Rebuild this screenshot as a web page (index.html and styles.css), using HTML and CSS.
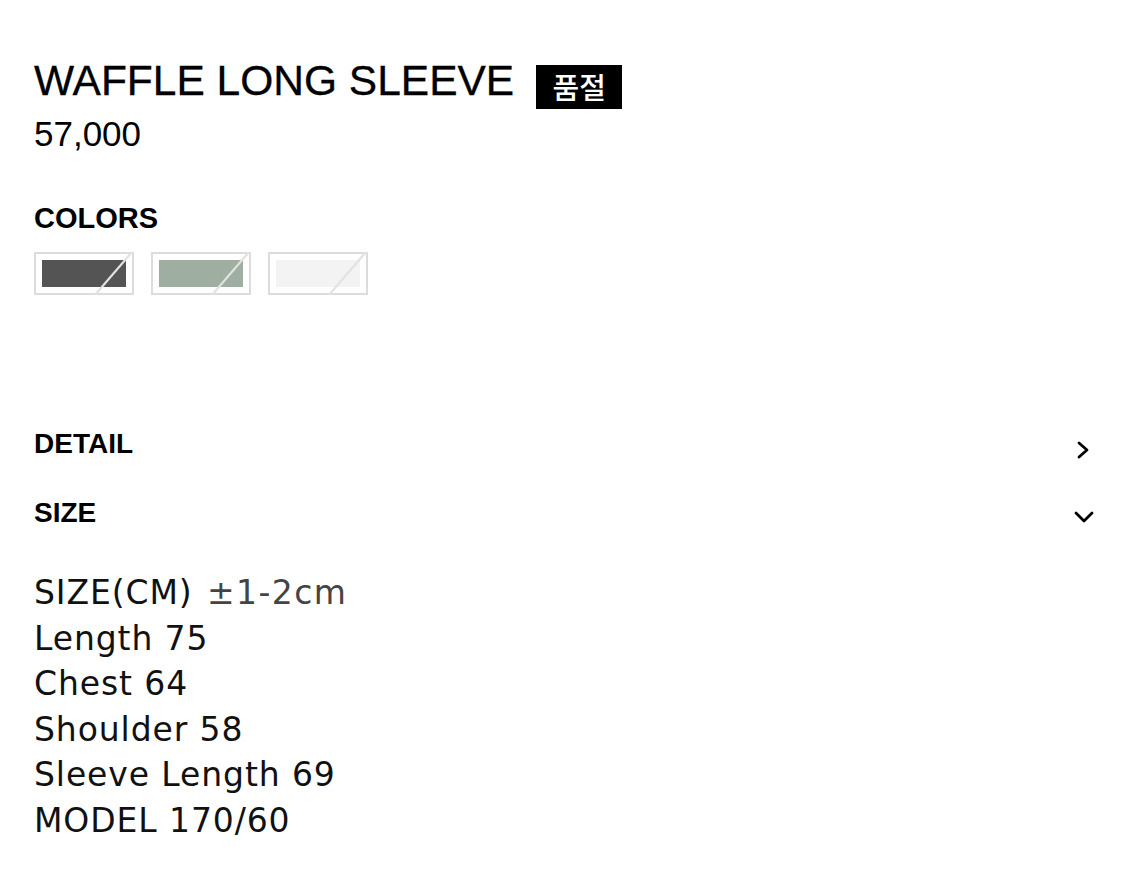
FILE: index.html
```html
<!DOCTYPE html>
<html lang="ko">
<head>
<meta charset="utf-8">
<link rel="stylesheet" href="styles.css">
</head>
<body>
<main class="product">
  <div class="title-row">
    <h1 class="title">WAFFLE LONG SLEEVE</h1>
    <span class="badge">품절</span>
  </div>
  <div class="price">57,000</div>

  <h2 class="colors-label">COLORS</h2>
  <div class="swatches">
    <span class="swatch"><span class="chip chip-charcoal"></span><svg class="slash" viewBox="0 0 100 43" preserveAspectRatio="none"><line x1="61" y1="43" x2="98" y2="0"/></svg></span>
    <span class="swatch"><span class="chip chip-sage"></span><svg class="slash" viewBox="0 0 100 43" preserveAspectRatio="none"><line x1="61" y1="43" x2="98" y2="0"/></svg></span>
    <span class="swatch"><span class="chip chip-white"></span><svg class="slash" viewBox="0 0 100 43" preserveAspectRatio="none"><line x1="61" y1="43" x2="98" y2="0"/></svg></span>
  </div>

  <section class="accordion">
    <div class="acc-row acc-detail">
      <span class="acc-title">DETAIL</span>
      <svg class="chev chev-right" viewBox="0 0 14 18"><path d="M3 2 L11 9 L3 16"/></svg>
    </div>
    <div class="acc-row acc-size">
      <span class="acc-title">SIZE</span>
      <svg class="chev chev-down" viewBox="0 0 20 12"><path d="M2 2 L10 10 L18 2"/></svg>
    </div>
    <div class="size-body">
      <p>SIZE(CM) <span class="muted">±1-2cm</span></p>
      <p>Length 75</p>
      <p>Chest 64</p>
      <p>Shoulder 58</p>
      <p>Sleeve Length 69</p>
      <p>MODEL 170/60</p>
    </div>
  </section>
</main>
</body>
</html>
```

FILE: styles.css
```css
* { box-sizing: border-box; }
html, body { margin: 0; padding: 0; background: #fff; }
body {
  font-family: "Liberation Sans", Arial, sans-serif;
  color: #000;
}
.product {
  padding: 60px 32px 0 34px;
}
.title-row {
  display: flex;
  align-items: flex-start;
  gap: 22px;
}
.title {
  margin: 0;
  font-size: 42.5px;
  font-weight: 400;
  line-height: 42px;
  color: #000;
  -webkit-text-stroke: 0.3px #000;
}
.badge {
  margin-top: 5px;
  width: 86px;
  height: 44px;
  background: #000;
  color: #fff;
  display: flex;
  align-items: center;
  justify-content: center;
  font-family: "Noto Sans CJK KR", sans-serif;
  font-weight: 500;
  font-size: 29px;
  line-height: 1;
  padding-bottom: 1px;
}
.price {
  margin-top: 5px;
  font-size: 35px;
  line-height: 40px;
}
.colors-label {
  margin: 47px 0 0;
  font-size: 29px;
  font-weight: 700;
  line-height: 34px;
}
.swatches {
  display: flex;
  gap: 17px;
  margin-top: 17px;
}
.swatch {
  position: relative;
  width: 100px;
  height: 43px;
  border: 2px solid #dcdcdc;
  padding: 6px 6px;
  display: block;
}
.chip {
  display: block;
  width: 100%;
  height: 100%;
}
.chip-charcoal { background: #545454; }
.chip-sage { background: #9eaea0; }
.chip-white { background: #f3f3f3; }
.slash {
  position: absolute;
  left: -2px;
  top: -2px;
  width: 100px;
  height: 43px;
}
.slash line {
  stroke: #e2e2e2;
  stroke-width: 2.2;
  vector-effect: non-scaling-stroke;
}
.accordion {
  margin-top: 132px;
}
.acc-row {
  display: flex;
  align-items: center;
  justify-content: space-between;
  height: 34px;
}
.acc-size { margin-top: 35px; }
.acc-title {
  font-size: 28px;
  font-weight: 700;
  line-height: 34px;
}
.chev path {
  fill: none;
  stroke: #000;
  stroke-width: 2.8;
  stroke-linecap: round;
  stroke-linejoin: round;
}
.chev-right {
  width: 14px;
  height: 18px;
  margin-top: 12px;
  margin-right: 3px;
}
.chev-down {
  width: 20px;
  height: 12px;
  margin-top: 8px;
  margin-right: -1px;
}
.size-body {
  margin-top: 40px;
  font-family: "DejaVu Sans", Verdana, sans-serif;
  font-size: 33px;
  line-height: 45.6px;
  letter-spacing: 0.9px;
  color: #111;
}
.size-body p { margin: 0; }
.muted {
  color: #444;
  margin-left: 3px;
  letter-spacing: 1.4px;
}
```
